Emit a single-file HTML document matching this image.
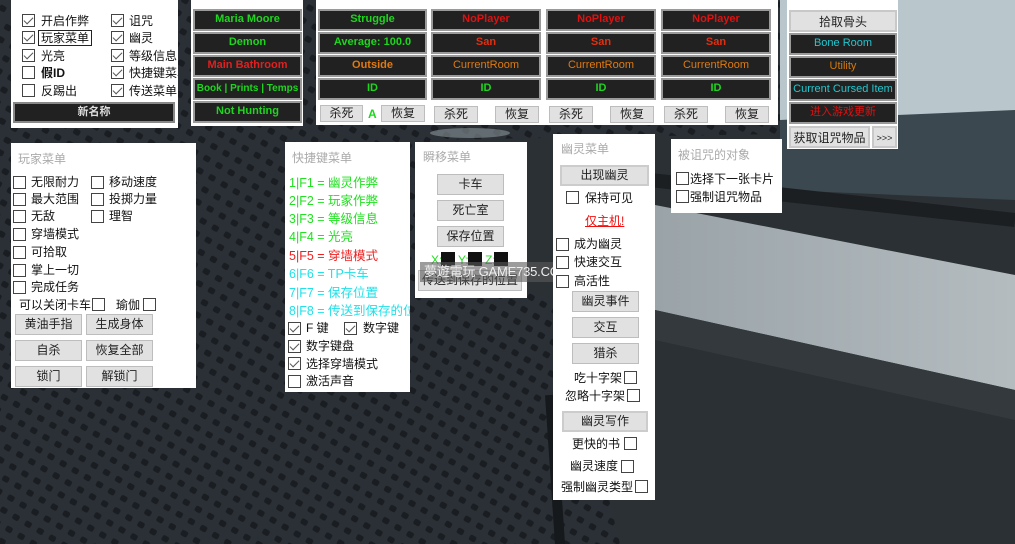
<!DOCTYPE html>
<html><head><meta charset="utf-8"><style>
*{margin:0;padding:0;box-sizing:border-box}
body{width:1015px;height:544px;overflow:hidden;position:relative;background:#262b30;font-family:"Liberation Sans","Noto Sans CJK SC",sans-serif;font-size:12px;color:#111}
.a{position:absolute}
.p{position:absolute;background:#fff}
.t{position:absolute;color:#aaa;font-size:12px}
.cb{position:absolute;width:13px;height:13px;border:1px solid #444;background:#fff}
.cb.c::after{content:"";position:absolute;left:3px;top:0px;width:4px;height:8px;border:solid #555;border-width:0 1.5px 1.5px 0;transform:rotate(45deg)}
.l{position:absolute;font-size:12px;line-height:14px;white-space:nowrap;color:#111}
.d{position:absolute;background:#212121;border:2px solid #9a9a9a;color:#1ed61e;font-weight:bold;font-size:11px;text-align:center;line-height:17px;white-space:nowrap;overflow:hidden}
.b{position:absolute;background:#e1e1e1;border:1px solid #bdbdbd;text-align:center;font-size:12px;line-height:18px;color:#222;white-space:nowrap}
.hk{position:absolute;left:289px;font-size:12.5px;white-space:nowrap;line-height:15px}
</style></head><body>
<svg class="a" style="left:0;top:0" width="1015" height="544">
<defs><pattern id="m" width="14" height="14" patternUnits="userSpaceOnUse" patternTransform="rotate(30)"><rect width="14" height="14" fill="#2a3036"/><rect x="3" y="3" width="7" height="6" rx="2" fill="#1a1e22"/></pattern>
<linearGradient id="w" x1="0" y1="0" x2="1" y2="0"><stop offset="0" stop-color="#9aa3a8"/><stop offset="1" stop-color="#b4bcc0"/></linearGradient></defs>
<rect width="1015" height="544" fill="url(#m)"/>
<polygon points="430,140 1015,130 1015,544 620,544 560,300 430,260" fill="#2b3034"/>
<polygon points="780,0 1015,0 1015,120 780,130" fill="#b9c6cc"/>
<polygon points="780,120 1015,110 1015,200 780,190" fill="#3b4850"/>
<polygon points="655,205 1015,275 1015,390 655,310" fill="url(#w)"/>
<polygon points="655,310 1015,390 1015,420 655,340" fill="#33393d"/>
<line x1="550" y1="395" x2="560" y2="544" stroke="#15191c" stroke-width="10"/>
<line x1="650" y1="180" x2="1015" y2="220" stroke="#1b1f22" stroke-width="14"/>
<ellipse cx="470" cy="133" rx="40" ry="5" fill="#8a949a" opacity=".6"/>
</svg>

<!-- panel 1 -->
<div class="p" style="left:11px;top:0;width:167px;height:128px"></div>
<div class="cb c" style="left:22px;top:14px"></div><div class="l" style="left:41px;top:14px">开启作弊</div>
<div class="cb c" style="left:22px;top:31px"></div><div class="l" style="left:38px;top:30px;border:1px solid #222;padding:0 2px">玩家菜单</div>
<div class="cb c" style="left:22px;top:49px"></div><div class="l" style="left:41px;top:49px">光亮</div>
<div class="cb" style="left:22px;top:66px"></div><div class="l" style="left:41px;top:66px;font-weight:bold">假ID</div>
<div class="cb" style="left:22px;top:84px"></div><div class="l" style="left:41px;top:84px">反踢出</div>
<div class="cb c" style="left:111px;top:14px"></div><div class="l" style="left:129px;top:14px">诅咒</div>
<div class="cb c" style="left:111px;top:31px"></div><div class="l" style="left:129px;top:31px">幽灵</div>
<div class="cb c" style="left:111px;top:49px"></div><div class="l" style="left:129px;top:49px">等级信息</div>
<div class="cb c" style="left:111px;top:66px"></div><div class="l" style="left:129px;top:66px;width:49px;overflow:hidden">快捷键菜单</div>
<div class="cb c" style="left:111px;top:84px"></div><div class="l" style="left:129px;top:84px">传送菜单</div>
<div class="d" style="left:13px;top:102px;width:162px;height:21px;color:#ddd;border-color:#888">新名称</div>

<!-- panel 2 -->
<div class="p" style="left:191px;top:0;width:112px;height:126px"></div>
<div class="d" style="left:193px;top:9px;width:109px;height:22px">Maria Moore</div>
<div class="d" style="left:193px;top:32px;width:109px;height:22px">Demon</div>
<div class="d" style="left:193px;top:55px;width:109px;height:22px;color:#e02020">Main Bathroom</div>
<div class="d" style="left:193px;top:78px;width:109px;height:22px;font-size:10px">Book | Prints | Temps</div>
<div class="d" style="left:193px;top:101px;width:109px;height:22px">Not Hunting</div>

<!-- panel 3 -->
<div class="p" style="left:316px;top:0;width:462px;height:125px"></div>
<div class="d" style="left:318px;top:9px;width:109px;height:22px">Struggle</div>
<div class="d" style="left:318px;top:32px;width:109px;height:22px">Average: 100.0</div>
<div class="d" style="left:318px;top:55px;width:109px;height:22px;color:#e07a10">Outside</div>
<div class="d" style="left:318px;top:78px;width:109px;height:22px">ID</div>
<div class="b" style="left:320px;top:105px;width:43px;height:17px;line-height:15px">杀死</div>
<div class="l" style="left:368px;top:107px;color:#1ed61e;font-weight:bold">A</div>
<div class="b" style="left:381px;top:105px;width:44px;height:17px;line-height:15px">恢复</div>

<div class="d" style="left:431px;top:9px;width:110px;height:22px;color:#e01010">NoPlayer</div>
<div class="d" style="left:431px;top:32px;width:110px;height:22px;color:#e03010">San</div>
<div class="d" style="left:431px;top:55px;width:110px;height:22px;color:#e07a10;font-weight:normal">CurrentRoom</div>
<div class="d" style="left:431px;top:78px;width:110px;height:22px">ID</div>
<div class="b" style="left:434px;top:106px;width:44px;height:17px;line-height:15px">杀死</div>
<div class="b" style="left:495px;top:106px;width:44px;height:17px;line-height:15px">恢复</div>

<div class="d" style="left:546px;top:9px;width:110px;height:22px;color:#e01010">NoPlayer</div>
<div class="d" style="left:546px;top:32px;width:110px;height:22px;color:#e03010">San</div>
<div class="d" style="left:546px;top:55px;width:110px;height:22px;color:#e07a10;font-weight:normal">CurrentRoom</div>
<div class="d" style="left:546px;top:78px;width:110px;height:22px">ID</div>
<div class="b" style="left:549px;top:106px;width:44px;height:17px;line-height:15px">杀死</div>
<div class="b" style="left:610px;top:106px;width:44px;height:17px;line-height:15px">恢复</div>

<div class="d" style="left:661px;top:9px;width:110px;height:22px;color:#e01010">NoPlayer</div>
<div class="d" style="left:661px;top:32px;width:110px;height:22px;color:#e03010">San</div>
<div class="d" style="left:661px;top:55px;width:110px;height:22px;color:#e07a10;font-weight:normal">CurrentRoom</div>
<div class="d" style="left:661px;top:78px;width:110px;height:22px">ID</div>
<div class="b" style="left:664px;top:106px;width:44px;height:17px;line-height:15px">杀死</div>
<div class="b" style="left:725px;top:106px;width:44px;height:17px;line-height:15px">恢复</div>

<!-- right panel -->
<div class="p" style="left:787px;top:0;width:111px;height:149px"></div>
<div class="b" style="left:789px;top:10px;width:108px;height:22px;line-height:20px;border:2px solid #c8c8c8">拾取骨头</div>
<div class="d" style="left:789px;top:33px;width:108px;height:22px;color:#20c8d0;font-weight:normal">Bone Room</div>
<div class="d" style="left:789px;top:56px;width:108px;height:22px;color:#d07a10;font-weight:normal">Utility</div>
<div class="d" style="left:789px;top:79px;width:108px;height:22px;color:#20c8d0;font-weight:normal">Current Cursed Item</div>
<div class="d" style="left:789px;top:102px;width:108px;height:22px;color:#e01010;font-weight:normal">进入游戏更新</div>
<div class="b" style="left:789px;top:126px;width:81px;height:22px;line-height:20px;border:2px solid #c8c8c8">获取诅咒物品</div>
<div class="b" style="left:872px;top:126px;width:25px;height:22px;line-height:20px;font-size:9px;border:2px solid #c8c8c8">&gt;&gt;&gt;</div>

<!-- player menu -->
<div class="p" style="left:11px;top:143px;width:185px;height:245px"></div>
<div class="t" style="left:18px;top:150px">玩家菜单</div>
<div class="cb" style="left:13px;top:176px"></div><div class="l" style="left:31px;top:175px">无限耐力</div>
<div class="cb" style="left:13px;top:193px"></div><div class="l" style="left:31px;top:192px">最大范围</div>
<div class="cb" style="left:13px;top:210px"></div><div class="l" style="left:31px;top:209px">无敌</div>
<div class="cb" style="left:13px;top:228px"></div><div class="l" style="left:31px;top:227px">穿墙模式</div>
<div class="cb" style="left:13px;top:246px"></div><div class="l" style="left:31px;top:245px">可拾取</div>
<div class="cb" style="left:13px;top:264px"></div><div class="l" style="left:31px;top:263px">掌上一切</div>
<div class="cb" style="left:13px;top:281px"></div><div class="l" style="left:31px;top:280px">完成任务</div>
<div class="cb" style="left:91px;top:176px"></div><div class="l" style="left:109px;top:175px">移动速度</div>
<div class="cb" style="left:91px;top:193px"></div><div class="l" style="left:109px;top:192px">投掷力量</div>
<div class="cb" style="left:91px;top:210px"></div><div class="l" style="left:109px;top:209px">理智</div>
<div class="l" style="left:19px;top:298px">可以关闭卡车</div><div class="cb" style="left:92px;top:298px"></div>
<div class="l" style="left:116px;top:298px">瑜伽</div><div class="cb" style="left:143px;top:298px"></div>
<div class="b" style="left:15px;top:314px;width:67px;height:21px">黄油手指</div>
<div class="b" style="left:86px;top:314px;width:67px;height:21px">生成身体</div>
<div class="b" style="left:15px;top:340px;width:67px;height:21px">自杀</div>
<div class="b" style="left:86px;top:340px;width:67px;height:21px">恢复全部</div>
<div class="b" style="left:15px;top:366px;width:67px;height:21px">锁门</div>
<div class="b" style="left:86px;top:366px;width:67px;height:21px">解锁门</div>

<!-- hotkey -->
<div class="p" style="left:285px;top:142px;width:125px;height:250px;overflow:hidden">
<div class="t" style="left:7px;top:7px">快捷键菜单</div>
<div class="hk" style="left:4px;top:34px;color:#22e022">1|F1 = 幽灵作弊</div>
<div class="hk" style="left:4px;top:52px;color:#22e022">2|F2 = 玩家作弊</div>
<div class="hk" style="left:4px;top:70px;color:#22e022">3|F3 = 等级信息</div>
<div class="hk" style="left:4px;top:88px;color:#22e022">4|F4 = 光亮</div>
<div class="hk" style="left:4px;top:107px;color:#f02020">5|F5 = 穿墙模式</div>
<div class="hk" style="left:4px;top:125px;color:#20e0e8">6|F6 = TP卡车</div>
<div class="hk" style="left:4px;top:144px;color:#20e0e8">7|F7 = 保存位置</div>
<div class="hk" style="left:4px;top:162px;color:#20e0e8">8|F8 = 传送到保存的位置</div>
</div>
<div class="cb c" style="left:288px;top:322px"></div><div class="l" style="left:306px;top:321px">F 键</div>
<div class="cb c" style="left:344px;top:322px"></div><div class="l" style="left:363px;top:321px">数字键</div>
<div class="cb c" style="left:288px;top:340px"></div><div class="l" style="left:306px;top:339px">数字键盘</div>
<div class="cb c" style="left:288px;top:357px"></div><div class="l" style="left:306px;top:357px">选择穿墙模式</div>
<div class="cb" style="left:288px;top:375px"></div><div class="l" style="left:306px;top:374px">激活声音</div>

<!-- teleport -->
<div class="p" style="left:415px;top:142px;width:112px;height:156px"></div>
<div class="t" style="left:423px;top:148px">瞬移菜单</div>
<div class="b" style="left:437px;top:174px;width:67px;height:21px">卡车</div>
<div class="b" style="left:437px;top:200px;width:67px;height:21px">死亡室</div>
<div class="b" style="left:437px;top:226px;width:67px;height:21px">保存位置</div>
<div class="l" style="left:431px;top:253px;color:#22e022">X:</div><div class="a" style="left:441px;top:252px;width:14px;height:14px;background:#111"></div>
<div class="l" style="left:458px;top:253px;color:#22e022">Y:</div><div class="a" style="left:468px;top:252px;width:14px;height:14px;background:#111"></div>
<div class="l" style="left:485px;top:253px;color:#22e022">Z:</div><div class="a" style="left:494px;top:252px;width:14px;height:14px;background:#111"></div>
<div class="b" style="left:418px;top:270px;width:104px;height:21px">传送到保存的位置</div>
<div class="a" style="left:420px;top:262px;width:172px;height:20px;background:rgba(90,90,90,.6);color:#f0f0f0;font-size:13px;line-height:20px;padding-left:4px;white-space:nowrap;overflow:hidden;letter-spacing:-0.2px">夢遊電玩 GAME735.COM</div>

<!-- ghost menu -->
<div class="p" style="left:553px;top:134px;width:102px;height:366px"></div>
<div class="t" style="left:561px;top:140px">幽灵菜单</div>
<div class="b" style="left:560px;top:165px;width:89px;height:21px;border:2px solid #ccc;line-height:17px">出现幽灵</div>
<div class="cb" style="left:566px;top:191px"></div><div class="l" style="left:585px;top:191px">保持可见</div>
<div class="l" style="left:585px;top:214px;color:#f01010;text-decoration:underline">仅主机!</div>
<div class="cb" style="left:556px;top:238px"></div><div class="l" style="left:574px;top:237px">成为幽灵</div>
<div class="cb" style="left:556px;top:256px"></div><div class="l" style="left:574px;top:255px">快速交互</div>
<div class="cb" style="left:556px;top:275px"></div><div class="l" style="left:574px;top:274px">高活性</div>
<div class="b" style="left:572px;top:291px;width:67px;height:21px">幽灵事件</div>
<div class="b" style="left:572px;top:317px;width:67px;height:21px">交互</div>
<div class="b" style="left:572px;top:343px;width:67px;height:21px">猎杀</div>
<div class="l" style="left:574px;top:371px">吃十字架</div><div class="cb" style="left:624px;top:371px"></div>
<div class="l" style="left:565px;top:389px">忽略十字架</div><div class="cb" style="left:627px;top:389px"></div>
<div class="b" style="left:562px;top:411px;width:86px;height:21px;border:2px solid #ccc;line-height:17px">幽灵写作</div>
<div class="l" style="left:572px;top:437px">更快的书</div><div class="cb" style="left:624px;top:437px"></div>
<div class="l" style="left:570px;top:459px">幽灵速度</div><div class="cb" style="left:621px;top:460px"></div>
<div class="l" style="left:561px;top:480px">强制幽灵类型</div><div class="cb" style="left:635px;top:480px"></div>

<!-- cursed -->
<div class="p" style="left:671px;top:139px;width:111px;height:74px"></div>
<div class="t" style="left:678px;top:146px">被诅咒的对象</div>
<div class="cb" style="left:676px;top:172px"></div><div class="l" style="left:690px;top:172px">选择下一张卡片</div>
<div class="cb" style="left:676px;top:190px"></div><div class="l" style="left:690px;top:190px">强制诅咒物品</div>
</body></html>
